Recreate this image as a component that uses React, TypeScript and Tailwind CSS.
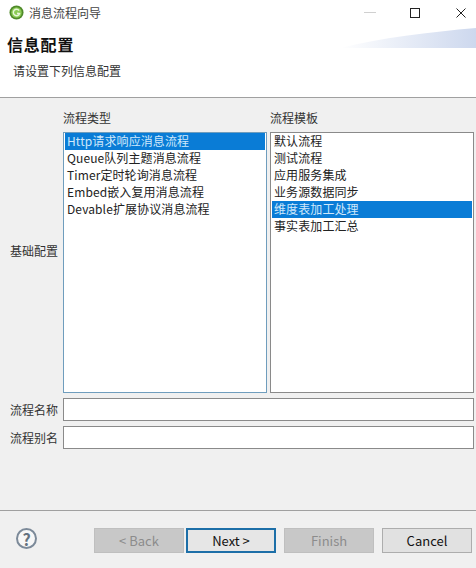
import React from 'react';

const FONT = "font-['Noto_Sans_CJK_SC','Noto_Sans',sans-serif]";

const TYPES = [
  'Http请求响应消息流程',
  'Queue队列主题消息流程',
  'Timer定时轮询消息流程',
  'Embed嵌入复用消息流程',
  'Devable扩展协议消息流程',
];

const TEMPLATES = [
  '默认流程',
  '测试流程',
  '应用服务集成',
  '业务源数据同步',
  '维度表加工处理',
  '事实表加工汇总',
];

const ListBox: React.FC<{ items: string[]; selected: number; focused?: boolean }> = ({
  items,
  selected,
  focused,
}) => (
  <div className={`h-[261px] border bg-white px-px ${focused ? 'border-[#6f9dbd]' : 'border-[#8a8a8a]'}`}>
    {items.map((item, i) => (
      <div
        key={item}
        className={`h-[17px] pl-[2px] text-[12px] leading-[16px] tracking-[0.1px] whitespace-nowrap ${
          i === selected ? 'bg-[#0a7cd6] text-[#cfe8fb]' : 'text-[#222]'
        }`}
      >
        {item}
      </div>
    ))}
  </div>
);

const WizardButton: React.FC<{ label: string; kind?: 'disabled' | 'focus' | 'normal' }> = ({
  label,
  kind = 'normal',
}) => {
  const styles = {
    disabled: 'border-[#bfbfbf] bg-[#c8c8c8] text-[#8c8c8c]',
    focus: 'border-2 border-[#1d6fa8] bg-[#e6e6e6] text-[#111]',
    normal: 'border-[#adadad] bg-[#e1e1e1] text-[#111]',
  };
  return (
    <div
      className={`flex h-[25px] w-[90px] items-center justify-center border text-[13px] ${styles[kind]}`}
    >
      {label}
    </div>
  );
};

export default function App() {
  return (
    <div className={`flex h-[568px] w-[476px] flex-col overflow-hidden bg-[#f0f0f0] text-[#222] ${FONT}`}>
      <div className="relative h-[98px] shrink-0 border-b border-[#a0a0a0] bg-white">
        <svg className="absolute right-0 top-[28px]" width="136" height="20" viewBox="0 0 136 20">
          <defs>
            <linearGradient id="banner" x1="0" x2="1" y1="0" y2="0">
              <stop offset="0" stopColor="#ffffff" />
              <stop offset="1" stopColor="#cdd8ee" />
            </linearGradient>
          </defs>
          <path d="M0 20 C40 10 90 4 136 0 V20 Z" fill="url(#banner)" />
        </svg>

        <div className="flex h-[25px] items-center pl-[9px]">
          <svg width="15" height="15" viewBox="0 0 16 16" className="mr-[5px]">
            <circle cx="8" cy="8" r="7.5" fill="#4f8a2a" />
            <circle cx="8" cy="8" r="5.6" fill="#8ccb55" />
            <path d="M10.8 6 A3.4 3.4 0 1 0 11.2 9.2 L8.6 8.8" fill="none" stroke="#e9f7dc" strokeWidth="1.5" />
          </svg>
          <span className="text-[12px] text-[#444]">消息流程向导</span>
          <div className="ml-auto flex items-center">
            <div className="mr-[34px] h-px w-[12px] bg-[#d0d0d0]" />
            <div className="mr-[36px] h-[10px] w-[10px] border border-[#222]" />
            <svg width="10" height="10" viewBox="0 0 10 10" className="mr-[10px]">
              <path d="M0.5 0.5 L9.5 9.5 M9.5 0.5 L0.5 9.5" stroke="#222" strokeWidth="1" />
            </svg>
          </div>
        </div>

        <div className="relative pl-[7px] pt-[9px] text-[16px] font-bold leading-[20px] tracking-[0.8px] text-[#111]">
          信息配置
        </div>
        <div className="relative pl-[13px] pt-[8px] text-[12px] leading-[17px] text-[#333]">请设置下列信息配置</div>
      </div>

      <div className="grid flex-1 grid-cols-[50px_204px_204px] grid-rows-[auto_261px_23px_23px] content-start gap-x-[3px] gap-y-[5px] pl-[10px] pt-[11px] text-[12px] text-[#333]">
        <div />
        <div className="mb-px leading-[17px]">流程类型</div>
        <div className="mb-px leading-[17px]">流程模板</div>

        <div className="mb-[24px] self-center">基础配置</div>
        <ListBox items={TYPES} selected={0} focused />
        <ListBox items={TEMPLATES} selected={4} />

        <div className="self-center">流程名称</div>
        <div className="col-span-2 border border-[#8a8a8a] bg-white" />

        <div className="self-center">流程别名</div>
        <div className="col-span-2 border border-[#8a8a8a] bg-white" />
      </div>

      <div className="flex h-[58px] shrink-0 items-start border-t border-[#a0a0a0] pl-[16px] pt-[17px]">
        <div className="mr-[57px] flex h-[21px] w-[21px] items-center justify-center rounded-full border-2 border-[#7c8a99] bg-[#f7f7f7] text-[16px] font-bold leading-none text-[#66737f]">
          ?
        </div>
        <div className="flex gap-[2px]">
          <WizardButton label="< Back" kind="disabled" />
          <WizardButton label="Next >" kind="focus" />
        </div>
        <div className="ml-[8px] flex gap-[8px]">
          <WizardButton label="Finish" kind="disabled" />
          <WizardButton label="Cancel" />
        </div>
      </div>
    </div>
  );
}
